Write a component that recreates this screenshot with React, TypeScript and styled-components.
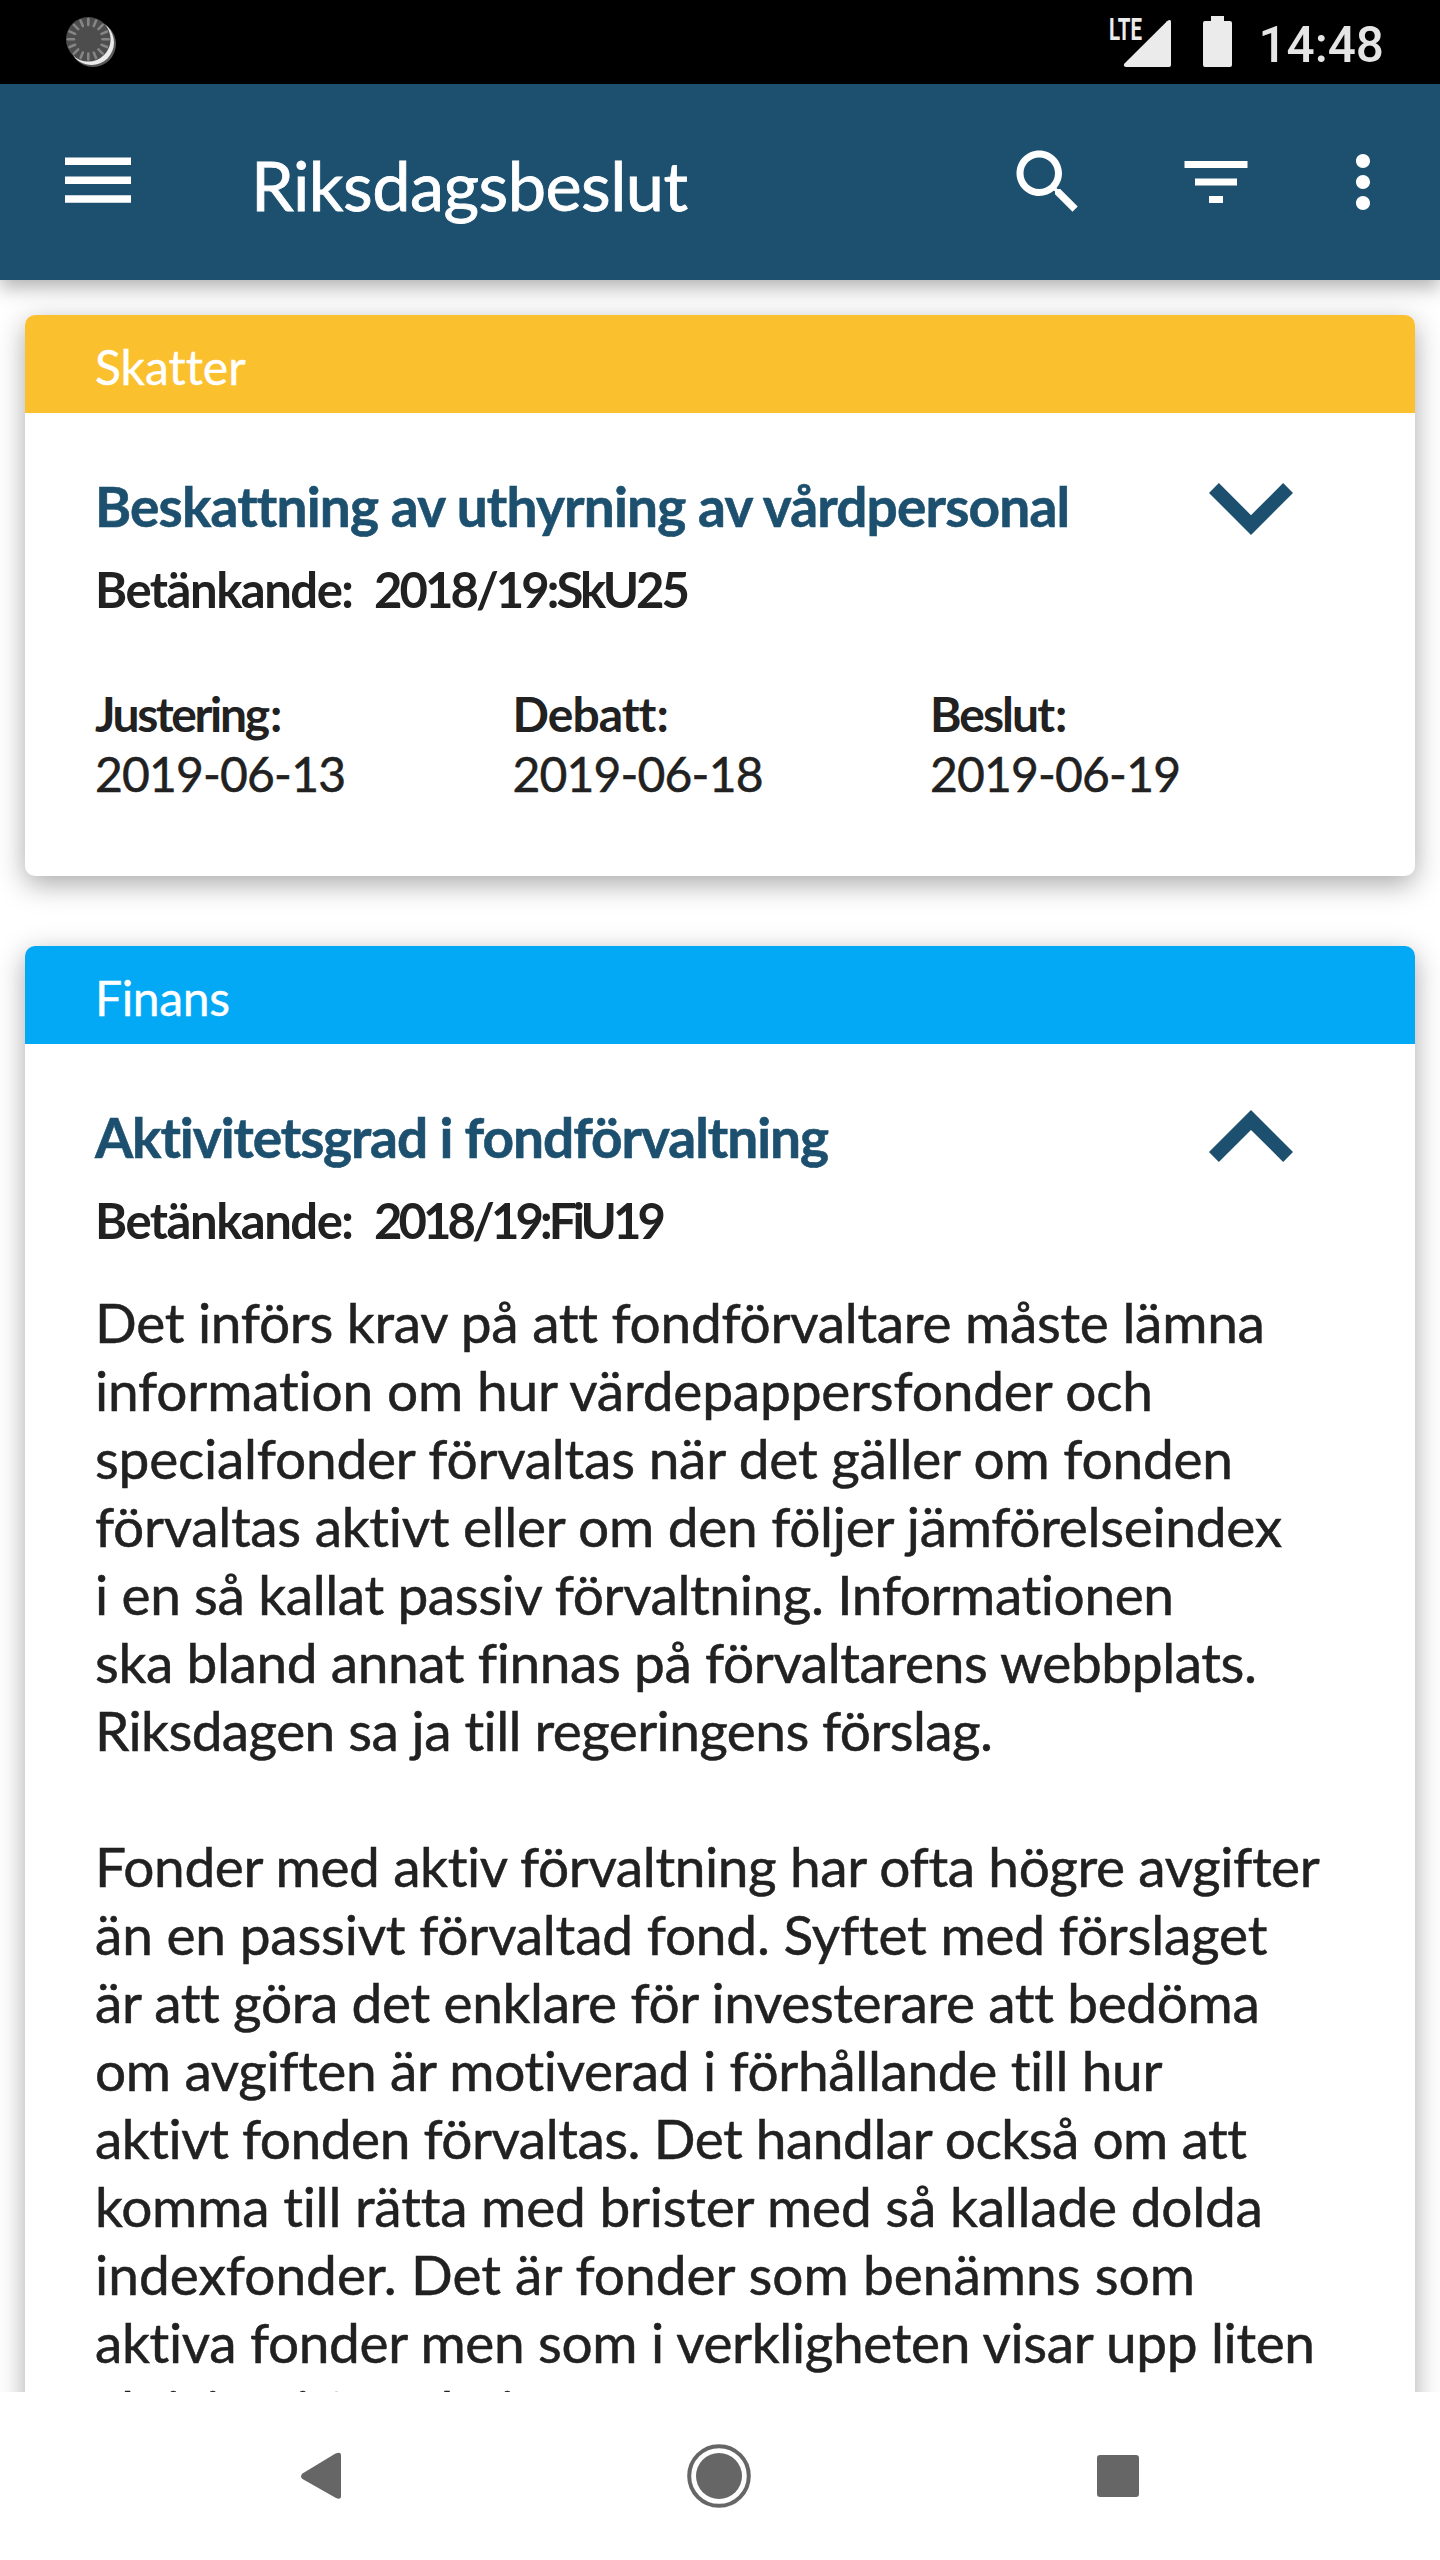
import React, { useLayoutEffect, useRef, useState } from "react";
import styled, { createGlobalStyle } from "styled-components";

const GlobalStyle = createGlobalStyle`
  * { box-sizing: border-box; }
  body { margin: 0; background: #fff; }
`;

const Screen = styled.div`
  width: 1440px;
  height: 2560px;
  display: flex;
  flex-direction: column;
  overflow: hidden;
  background: #fff;
  color: #212121;
  font-family: Lato, "Open Sans", sans-serif;
`;

const StatusBar = styled.header`
  height: 84px;
  flex: none;
  display: flex;
  align-items: flex-start;
  padding: 16px 56px 0 66px;
  background: #000;
  color: #ebebeb;
`;

const StatusIcons = styled.div`
  display: flex;
  align-items: flex-start;
  margin-left: auto;
`;

const Clock = styled.time`
  margin-left: 26px;
  padding-top: 1px;
  font: 500 49.5px/56px Roboto, sans-serif;
  color: #e5e5e5;
`;

const AppBar = styled.nav`
  height: 196px;
  flex: none;
  display: flex;
  align-items: center;
  padding: 0 35px 0 65px;
  background: #1c506e;
  color: #fff;
  box-shadow: 0 8px 18px rgba(0, 0, 0, 0.3);
  z-index: 2;
`;

const AppTitle = styled.h1`
  flex: 1;
  margin: 5px 0 0 120px;
  font-size: 68.5px;
  line-height: 84px;
  font-weight: 400;
  -webkit-text-stroke: 0.8px currentColor;
`;

const IconButton = styled.button<{ $gap?: number }>`
  display: flex;
  padding: 0;
  border: 0;
  background: none;
  color: inherit;
  margin-left: ${(p) => p.$gap ?? 0}px;
`;

const Feed = styled.main`
  flex: 1;
  min-height: 0;
  overflow: hidden;
  display: flex;
  flex-direction: column;
  gap: 70px;
  padding: 35px 25px 0;
`;

const Card = styled.article`
  flex: none;
  border-radius: 10px;
  background: #fff;
  box-shadow: 0 8px 28px rgba(0, 0, 0, 0.34);
`;

const Category = styled.div<{ $color: string }>`
  height: 98px;
  padding: 22px 0 0 70px;
  border-radius: 10px 10px 0 0;
  background: ${(p) => p.$color};
  color: #fff;
  font-size: 48px;
  line-height: 60px;
  -webkit-text-stroke: 0.4px currentColor;
`;

const CardBody = styled.div<{ $height?: number }>`
  height: ${(p) => (p.$height ? `${p.$height}px` : "auto")};
  padding: 59px 81px 0 70px;
`;

const Heading = styled.div`
  display: flex;
  justify-content: space-between;
  height: 72px;
`;

const CardTitle = styled.h2`
  margin: 0;
  font-size: 55px;
  line-height: 68px;
  font-weight: 700;
  color: #1c506e;
  -webkit-text-stroke: 0.6px currentColor;
`;

const Reference = styled.div`
  display: flex;
  gap: 20px;
  margin-top: 15px;
  font-size: 49px;
  line-height: 60px;
  font-weight: 700;
`;

const Dates = styled.dl`
  display: grid;
  grid-template-columns: repeat(3, 417.5px);
  margin: 65px 0 0;
  font-size: 48px;
`;

const DateLabel = styled.dt`
  line-height: 60px;
  font-weight: 700;
`;

const DateValue = styled.dd`
  margin: 0;
  line-height: 60px;
  -webkit-text-stroke: 0.5px currentColor;
`;

const Summary = styled.div`
  padding-top: 38px;
  font-size: 55px;
  line-height: 68px;
  -webkit-text-stroke: 0.5px currentColor;
`;

const Line = styled.div`
  height: 68px;
`;

const Run = styled.span`
  display: inline-block;
  white-space: pre;
`;

const NavBar = styled.footer`
  height: 168px;
  flex: none;
  display: flex;
  align-items: center;
  justify-content: space-between;
  padding: 0 301px 0 299px;
  background: #fff;
  color: #666;
  z-index: 2;
`;

/** One run of text, tracked so that it spans the given measure. */
function Fit({ width, children }: { width: number; children: string }) {
  const ref = useRef<HTMLSpanElement>(null);
  const [tracking, setTracking] = useState(0);
  useLayoutEffect(() => {
    const natural = ref.current!.getBoundingClientRect().width;
    setTracking((width - natural) / (children.length - 1));
  }, [width, children]);
  return (
    <Run ref={ref} style={{ letterSpacing: `${tracking}px`, marginRight: `${-tracking}px` }}>
      {children}
    </Run>
  );
}

const ticks = Array.from({ length: 16 }, (_, i) => i * 22.5);

const SyncIcon = () => (
  <svg width="52" height="52" viewBox="0 0 52 52">
    <circle cx="27" cy="28" r="23" fill="#5a5a5a" />
    <circle cx="25.5" cy="26.5" r="22.5" fill="#ebebeb" />
    <circle cx="22.3" cy="23.3" r="22.3" fill="#4d4d4d" />
    {ticks.map((a) => (
      <path key={a} d="M22.3 3v6" stroke="#858585" strokeWidth="2.6" strokeLinecap="round" transform={`rotate(${a} 22.3 23.3)`} />
    ))}
  </svg>
);

const SignalIcon = () => (
  <svg width="64" height="52" viewBox="0 0 64 52" overflow="visible">
    <text x="0" y="24" fontFamily="Roboto, sans-serif" fontWeight="700" fontSize="31" textLength="33" lengthAdjust="spacingAndGlyphs" fill="#ebebeb">
      LTE
    </text>
    <path d="M58 5.300Q62 2.500 62 6V49a2 2 0 0 1-2 2H17q-3.500-1-1.500-3.500Z" fill="#ebebeb" />
  </svg>
);

const BatterySvg = styled.svg`
  margin-left: 30px;
`;

const BatteryIcon = () => (
  <BatterySvg width="29" height="51" viewBox="0 0 29 51">
    <path d="M8 0h13v5h6a2 2 0 0 1 2 2v42a2 2 0 0 1-2 2H2a2 2 0 0 1-2-2V7a2 2 0 0 1 2-2h6Z" fill="currentColor" />
  </BatterySvg>
);

const MenuSvg = styled.svg`
  margin-bottom: 4px;
`;

const MenuIcon = () => (
  <MenuSvg width="66" height="46" viewBox="0 0 66 46">
    <path d="M0 .5h66v7.500H0zM0 19.400h66v7.500H0zM0 38.300h66v7.500H0z" fill="currentColor" />
  </MenuSvg>
);

function Glyph({ d, size = 84 }: { d: string; size?: number }) {
  return (
    <svg width={size} height={size} viewBox="0 0 24 24">
      <path d={d} fill="currentColor" />
    </svg>
  );
}

const SEARCH =
  "M15.5 14h-.79l-.28-.27C15.410 12.590 16 11.110 16 9.500 16 5.910 13.090 3 9.500 3S3 5.910 3 9.500 5.910 16 9.500 16c1.610 0 3.090-.59 4.230-1.570l.27.28v.79l5 4.990L20.490 19l-4.990-5zm-6 0C7.010 14 5 11.990 5 9.500S7.010 5 9.500 5 14 7.010 14 9.500 11.990 14 9.500 14z";
const FILTER = "M10 18h4v-2h-4v2zM3 6v2h18V6H3zm3 7h12v-2H6v2z";
const MORE =
  "M12 8c1.100 0 2-.9 2-2s-.9-2-2-2-2 .9-2 2 .9 2 2 2zm0 2c-1.100 0-2 .9-2 2s.9 2 2 2 2-.9 2-2-.9-2-2-2zm0 6c-1.100 0-2 .9-2 2s.9 2 2 2 2-.9 2-2-.9-2-2-2z";

const ChevronSvg = styled.svg<{ $open?: boolean }>`
  flex: none;
  margin: ${(p) => (p.$open ? 7 : 11)}px 41px 0 0;
`;

const Chevron = ({ open }: { open?: boolean }) => (
  <ChevronSvg $open={open} width="84" height="52" viewBox="6 8.295 12 7.410">
    <path
      d={open ? "M12 8.295l-6 6 1.410 1.410L12 11.125l4.590 4.580L18 14.295z" : "M16.590 8.295L12 12.875 7.410 8.295 6 9.705l6 6 6-6z"}
      fill="#1c506e"
    />
  </ChevronSvg>
);

const summary: [string, number][] = [
  ["Det införs krav på att fondförvaltare måste lämna", 1168],
  ["information om hur värdepappersfonder och", 1059],
  ["specialfonder förvaltas när det gäller om fonden", 1138],
  ["förvaltas aktivt eller om den följer jämförelseindex", 1188],
  ["i en så kallat passiv förvaltning. Informationen", 1080],
  ["ska bland annat finnas på förvaltarens webbplats.", 1161],
  ["Riksdagen sa ja till regeringens förslag.", 899],
  ["", 0],
  ["Fonder med aktiv förvaltning har ofta högre avgifter", 1223],
  ["än en passivt förvaltad fond. Syftet med förslaget", 1171],
  ["är att göra det enklare för investerare att bedöma", 1161],
  ["om avgiften är motiverad i förhållande till hur", 1068],
  ["aktivt fonden förvaltas. Det handlar också om att", 1151],
  ["komma till rätta med brister med så kallade dolda", 1167],
  ["indexfonder. Det är fonder som benämns som", 1100],
  ["aktiva fonder men som i verkligheten visar upp liten", 1221],
  ["aktivitet i förvaltningen.", 546],
];

const dates: [string, number, string][] = [
  ["Justering", 175, "2019-06-13"],
  ["Debatt", 142, "2019-06-18"],
  ["Beslut", 125, "2019-06-19"],
];

export default function App() {
  return (
    <Screen>
      <GlobalStyle />
      <StatusBar>
        <SyncIcon />
        <StatusIcons>
          <SignalIcon />
          <BatteryIcon />
          <Clock>14:48</Clock>
        </StatusIcons>
      </StatusBar>
      <AppBar>
        <IconButton aria-label="Meny"><MenuIcon /></IconButton>
        <AppTitle><Fit width={437}>Riksdagsbeslut</Fit></AppTitle>
        <IconButton aria-label="Sök"><Glyph d={SEARCH} /></IconButton>
        <IconButton aria-label="Filtrera" $gap={84}><Glyph d={FILTER} /></IconButton>
        <IconButton aria-label="Mer" $gap={63}><Glyph d={MORE} /></IconButton>
      </AppBar>
      <Feed>
        <Card>
          <Category $color="#fbc02d"><Fit width={149}>Skatter</Fit></Category>
          <CardBody $height={463}>
            <Heading>
              <CardTitle><Fit width={973}>Beskattning av uthyrning av vårdpersonal</Fit></CardTitle>
              <Chevron />
            </Heading>
            <Reference>
              <Fit width={259}>Betänkande:</Fit>
              <Fit width={316}>2018/19:SkU25</Fit>
            </Reference>
            <Dates>
              {dates.map(([label, width, value]) => (
                <div key={label}>
                  <DateLabel><Fit width={width}>{label}</Fit>:</DateLabel>
                  <DateValue><Fit width={251}>{value}</Fit></DateValue>
                </div>
              ))}
            </Dates>
          </CardBody>
        </Card>
        <Card>
          <Category $color="#03a9f4"><Fit width={135}>Finans</Fit></Category>
          <CardBody>
            <Heading>
              <CardTitle><Fit width={735}>Aktivitetsgrad i fondförvaltning</Fit></CardTitle>
              <Chevron open />
            </Heading>
            <Reference>
              <Fit width={259}>Betänkande:</Fit>
              <Fit width={292}>2018/19:FiU19</Fit>
            </Reference>
            <Summary>
              {summary.map(([text, width], i) => (
                <Line key={i}>{text && <Fit width={width}>{text}</Fit>}</Line>
              ))}
            </Summary>
          </CardBody>
        </Card>
      </Feed>
      <NavBar>
        <svg width="42" height="48" viewBox="0 0 42 48">
          <path d="M3.500 21.500 36.500 1.500Q42-.5 42 3V44q0 4-5 2L3.500 27Q.5 24.500 3.500 21.500Z" fill="currentColor" />
        </svg>
        <svg width="64" height="64" viewBox="0 0 64 64">
          <circle cx="32" cy="32" r="29.800" fill="none" stroke="currentColor" strokeWidth="4" />
          <circle cx="32" cy="32" r="23" fill="currentColor" />
        </svg>
        <svg width="42" height="42" viewBox="0 0 42 42">
          <rect width="42" height="42" rx="3" fill="currentColor" />
        </svg>
      </NavBar>
    </Screen>
  );
}
